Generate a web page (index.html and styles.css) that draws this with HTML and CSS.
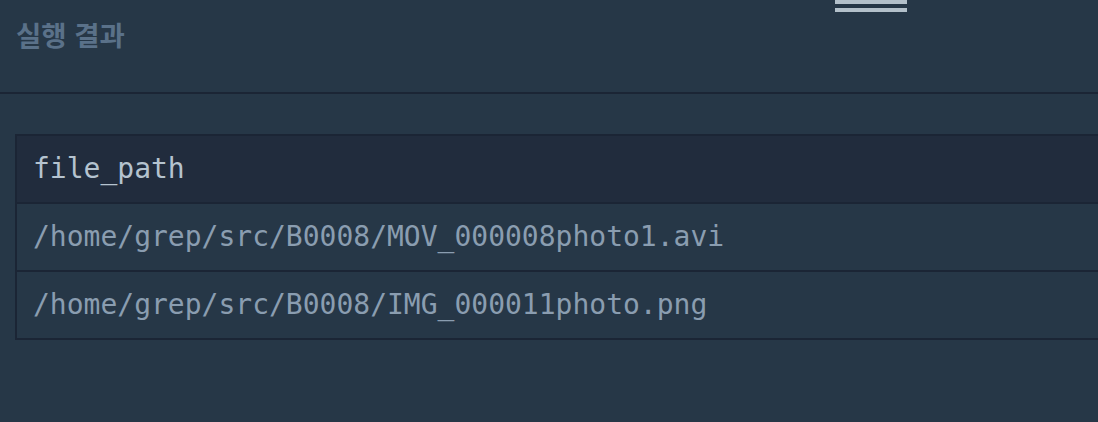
FILE: index.html
```html
<!DOCTYPE html>
<html lang="ko">
<head>
<meta charset="utf-8">
<link rel="stylesheet" href="styles.css">
</head>
<body>
<header class="top">
  <h2 class="title">실행 결과</h2>
  <div class="menu"><span class="bar"></span><span class="bar"></span></div>
</header>
<section class="results">
  <table class="grid">
    <thead>
      <tr><th>file_path</th></tr>
    </thead>
    <tbody>
      <tr><td>/home/grep/src/B0008/MOV_000008photo1.avi</td></tr>
      <tr><td>/home/grep/src/B0008/IMG_000011photo.png</td></tr>
    </tbody>
  </table>
</section>
</body>
</html>
```
FILE: styles.css
```css
html, body {
  margin: 0;
  padding: 0;
  background: #263747;
  overflow: hidden;
  width: 1098px;
  height: 422px;
}
.top {
  position: relative;
  border-bottom: 2px solid #1b2535;
  display: flex;
  align-items: center;
  padding: 0 16px 22px;
  height: 70px;
}
.title {
  margin: 0;
  font-family: "Noto Sans CJK KR", "Noto Sans", sans-serif;
  font-weight: 700;
  font-size: 27.5px;
  color: #5a7189;
  line-height: 1;
}
.menu {
  position: absolute;
  left: 835px;
  top: 0;
  display: flex;
  flex-direction: column;
  gap: 4px;
}
.menu .bar {
  display: block;
  width: 72px;
  height: 4px;
  background: #b3c0ca;
}
.results {
  padding: 40px 0 0 15px;
}
.grid {
  border-collapse: collapse;
  width: 1083px;
  font-family: "DejaVu Sans Mono", "Liberation Mono", monospace;
  font-size: 28px;
}
.grid th, .grid td {
  border: 2px solid #1b2535;
  border-right: none;
  line-height: 34px;
  padding: 16px 17px 16px 16px;
  text-align: left;
  vertical-align: middle;
  font-weight: 400;
}
.grid th {
  background: #212c3d;
  color: #b5c3cf;
}
.grid td {
  color: #8a9db0;
}
```
